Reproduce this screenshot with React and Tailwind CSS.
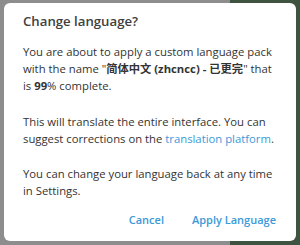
export default function App() {
  return (
    <div className="relative h-[245px] w-[300px] overflow-hidden bg-[#3f5440] font-['Open_Sans','Noto_Sans_CJK_SC',sans-serif]">
      <div className="flex h-full">
        <div className="h-full w-[230px] bg-[#8d8d8d]" />
        <div className="h-full flex-1 bg-[#3f5440]" />
      </div>

      <div className="absolute left-[4px] top-[3px] flex h-[238px] w-[292px] flex-col rounded-md bg-white pl-[19px] pr-[20px] pt-[8px]">
        <h2 className="text-[13.2px] font-semibold leading-[20px] text-[#404040]">Change language?</h2>

        <div className="mt-[12px] text-[11.3px] leading-[17px] text-[#333333]">
          <p>
            You are about to apply a custom language pack with the name "
            <b className="font-bold">简体中文 (zhcncc) - 已更完</b>" that is <b className="font-bold">99</b>% complete.
          </p>
          <p className="mt-[19px]">
            This will translate the entire interface. You can suggest corrections on the{" "}
            <span className="text-[#3a9ad9]">translation platform</span>.
          </p>
          <p className="mt-[18px]">You can change your language back at any time in Settings.</p>
        </div>

        <div className="mt-auto mb-[13px] flex justify-end gap-[28px] text-[11px] font-semibold leading-[17px] text-[#3a9ad9]">
          <button type="button">Cancel</button>
          <button type="button">Apply Language</button>
        </div>
      </div>
    </div>
  );
}
